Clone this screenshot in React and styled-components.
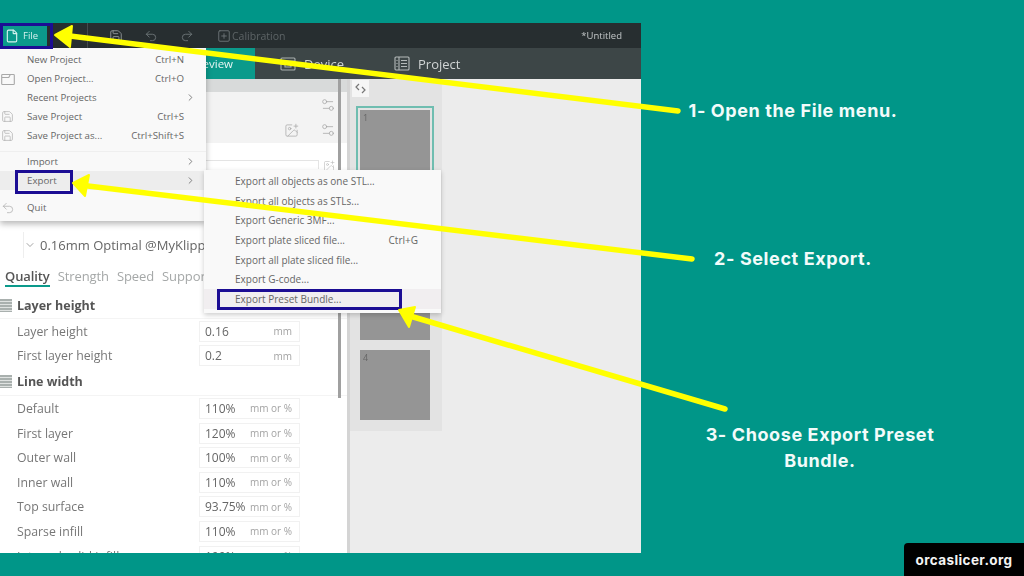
import React from "react";
import styled, { createGlobalStyle } from "styled-components";
import { ChevronRight, ChevronDown, Settings2, Save, Undo2, Redo2, SquarePlus, File as FileIcon, ImagePlus } from "lucide-react";

const Global = createGlobalStyle`
  html, body { margin: 0; padding: 0; background: #009688; }
  #root { width: 1024px; height: 576px; overflow: hidden; }
  * { box-sizing: border-box; }
`;
const Stage = styled.div`
  position: relative; width: 1024px; height: 576px; background: #009688;
  display: flex; overflow: hidden; font-family: "Open Sans", "Liberation Sans", sans-serif;
`;
const Shot = styled.div`
  position: relative; width: 641px; height: 530px; margin-top: 23px; flex: none;
`;
const Window = styled.div`
  width: 100%; height: 100%; background: #ececec; display: flex; flex-direction: column; overflow: hidden; filter: blur(0.45px);
`;
const TitleBar = styled.div`
  height: 25px; flex: none; background: #272e30; display: flex; align-items: center; color: #8b9294; padding-left: 3px;
`;
const FileButton = styled.div`
  width: 44px; height: 20px; background: #0b9a8b; color: #d5f1ee; display: flex; align-items: center; gap: 4px; padding-left: 2px; font-size: 9.5px;
`;
const TitleDivider = styled.div`
  width: 1px; height: 25px; background: #444b4d; margin: 0 21px 0 40px;
`;
const TitleIcon = styled.span`
  display: flex; width: 14px; margin-right: ${p => p.$gap}px; color: ${p => p.$color || "#969c9e"};
`;
const Dim = styled.span`
  font-size: 10.5px; color: #5d6466; margin-left: -14px;
`;
const Untitled = styled.span`
  margin-left: auto; margin-right: 19px; font-size: 9.5px; color: #c3c7c8;
`;
const TabBar = styled.div`
  height: 31px; flex: none; background: #3d4647; display: flex; align-items: stretch; color: #d0d4d4; font-size: 13px;
`;
const ActiveTab = styled.div`
  width: 255px; background: #0b9a8b; color: #e8f6f4; display: flex; align-items: center; justify-content: flex-end; padding-right: 22px; font-size: 11.5px;
`;
const Tab = styled.div`
  display: flex; align-items: center; gap: 8px; margin-left: ${p => p.$left}px;
`;
const Body = styled.div`
  flex: 1; min-height: 0; display: flex;
`;
const Sidebar = styled.div`
  position: relative; width: 347px; flex: none; background: #fff; overflow: hidden;
`;
const GreyStrip = styled.div`
  height: 13px; background: #d8dada;
`;
const ToolPanel = styled.div`
  height: 51px; background: #f3f3f3; display: flex; flex-direction: column; align-items: flex-end; justify-content: center; gap: 9px; padding-right: 11px; color: #a8a8a8;
`;
const ToolRow = styled.div`
  display: flex; align-items: center; gap: 21px;
`;
const FilamentRow = styled.div`
  height: 89px; display: flex; justify-content: flex-end; padding: 17px 12px 0 0; gap: 4px; color: #bbb;
`;
const FilamentInput = styled.div`
  width: 120px; height: 9px; border: 1px solid #e4e4e4; border-bottom: 0;
`;
const PresetBox = styled.div`
  margin-left: 23px; height: 26px; display: flex; align-items: center; gap: 4px; color: #666; font-size: 13px; border-left: 1px solid #eee; white-space: nowrap;
`;
const Tabs = styled.div`
  display: flex; gap: 8px; padding: 10px 0 0 5px; height: 34px; font-size: 13px; color: #a5a8a8; white-space: nowrap; letter-spacing: -0.1px;
`;
const SubTab = styled.span`
  height: 19px; font-weight: ${p => (p.$active ? 600 : 500)}; color: ${p => (p.$active ? "#555" : "#a5a8a8")};
  border-bottom: ${p => (p.$active ? "2px solid #0b9a8b" : "0")}; line-height: 16px;
`;
const Section = styled.div`
  height: ${p => p.$h || 27}px; display: flex; align-items: center; gap: 5px; font-size: 12.5px; font-weight: 700; color: #555;
  border-bottom: 1px solid #f4f4f4;
`;
const Stripes = styled.span`
  width: 12px; height: 13px; background: repeating-linear-gradient(180deg, #a9b0ae 0 2px, #dfe2e1 2px 3px);
`;
const Row = styled.div`
  height: 24.6px; display: flex; align-items: center; padding-left: 17px; font-size: 12.3px; color: #777;
`;
const Label = styled.span`
  width: 182px;
`;
const Field = styled.div`
  width: 101px; height: 21px; border: 1px solid #f1f1f1; display: flex; align-items: center; justify-content: space-between; padding: 0 7px 0 5px; color: #666; font-size: 12px;
`;
const Unit = styled.span`
  font-size: 10px; color: #a3a3a3;
`;
const Scroll = styled.div`
  position: absolute; right: 6px; top: 0; bottom: 155px; width: 3px; background: #a0a0a0;
`;
const Splitter = styled.div`
  width: 3px; flex: none; background: #d4d4d4;
`;
const Plates = styled.div`
  position: relative; width: 92px; height: 352px; flex: none; background: #e3e3e3; display: flex; flex-direction: column; align-items: center; padding: 31px 2px 0 0;
`;
const Toggle = styled.div`
  position: absolute; top: 1px; left: 2px; width: 17px; height: 17px; background: #f6f6f6; display: flex; align-items: center; justify-content: center;
`;
const Plate = styled.div`
  width: 70px; height: 70px; flex: none; margin-bottom: 10px; background: #959595; color: #666; font-size: 9px; padding: 1px 3px;
  outline: ${p => (p.$active ? "2px solid #6fbdb0" : "none")}; outline-offset: 2px;
`;
const Menu = styled.div`
  position: absolute; top: 25px; left: 0; width: 206px; background: #f9f9f9; padding: 1.5px 0 4px; box-shadow: 0 3px 6px rgba(0,0,0,.28); color: #666; font-size: 9.7px;
`;
const Item = styled.div`
  position: relative; height: 19px; display: flex; align-items: center; padding: 0 16px 0 27px; white-space: nowrap;
  background: ${p => (p.$hover ? "#ededed" : "transparent")};
`;
const ItemIcon = styled.span`
  position: absolute; left: 1px; top: 3px; display: flex; color: #a9a9a9;
`;
const Shortcut = styled.span`
  margin-left: auto; margin-right: 6px;
`;
const SubShortcut = styled.span`
  margin-left: auto;
`;
const Chevron = styled.span`
  margin-left: auto; margin-right: -6px; display: flex; color: #777;
`;
const Gap = styled.div`
  height: 7.5px; border-bottom: ${p => (p.$line ? "1px solid #efefef" : "0")};
`;
const SubMenu = styled.div`
  position: absolute; top: 147px; left: 204px; width: 237px; background: #f9f9f9; padding: 1.5px 0 4px; box-shadow: 0 2px 5px rgba(0,0,0,.2); color: #666; font-size: 10px;
`;
const SubItem = styled.div`
  height: 19.6px; display: flex; align-items: center; padding: 0 23px 0 31px; white-space: nowrap;
  background: ${p => (p.$hover ? "#f1eef0" : "transparent")};
`;
const Mark = styled.div`
  position: absolute; left: ${p => p.$x}px; top: ${p => p.$y}px; width: ${p => p.$w}px; height: ${p => p.$h}px; border: 3px solid #1c0d94;
`;
const Arrows = styled.svg`
  position: absolute; inset: 0; width: 1024px; height: 576px; pointer-events: none;
`;
const Captions = styled.div`
  flex: 1; display: flex; flex-direction: column; color: #f2fbfa; font-family: Inter, "Open Sans", sans-serif; font-weight: 700; font-size: 18px; line-height: 26px; text-align: center;
`;
const Caption = styled.div`
  width: ${p => p.$w}px; margin-top: ${p => p.$top}px; margin-left: ${p => p.$left}px; letter-spacing: 0.6px;
`;
const Brand = styled.div`
  position: absolute; right: 0; bottom: 0; width: 120px; height: 33px; border-radius: 4px 0 0 0; background: #000; color: #f4f4f4;
  display: flex; align-items: center; justify-content: center; font-family: Inter, sans-serif; font-weight: 700; font-size: 13.5px; letter-spacing: .4px;
`;

const DeviceGlyph = () => (
  <svg width="16" height="14" viewBox="0 0 16 14" fill="none" stroke="#aab0b0" strokeWidth="1.1">
    <rect x="1" y="1" width="14" height="12" rx="1" /><path d="M1 4h14M5 7h6v3H5z" />
  </svg>
);
const ProjectGlyph = () => (
  <svg width="16" height="15" viewBox="0 0 16 15" fill="none" stroke="#b5baba" strokeWidth="1.1">
    <rect x="1" y="1" width="14" height="13" rx="1" /><path d="M5 1v13M7 4.500h6M7 7.500h6M7 10.500h6M2.500 7.500h1M2.500 10.500h1M2.500 4.500h1" />
  </svg>
);
const OpenGlyph = () => (
  <svg width="14" height="14" viewBox="0 0 14 14" fill="none" stroke="#a9a9a9" strokeWidth="1.1">
    <path d="M1.500 2.500h11a.8.8 0 0 1 .8.8v8.400a.8.8 0 0 1-.8.8h-11a.8.8 0 0 1-.8-.8V3.300a.8.8 0 0 1 .8-.8zM.8 5.500h7l1.500-3" />
  </svg>
);
const CollapseGlyph = () => (
  <svg width="13" height="13" viewBox="0 0 13 13" fill="none" stroke="#777" strokeWidth="1.2">
    <path d="M5 2L2 5l3 3M8 5l3 3-3 3" />
  </svg>
);

const lines = [
  { n: "Default", v: "110%" }, { n: "First layer", v: "120%" }, { n: "Outer wall", v: "100%" },
  { n: "Inner wall", v: "110%" }, { n: "Top surface", v: "93.75%" }, { n: "Sparse infill", v: "110%" },
  { n: "Internal solid infill", v: "100%" },
];

export default function App() {
  return (
    <Stage>
      <Global />
      <Shot>
        <Window>
          <TitleBar>
            <FileButton><FileIcon size={14} strokeWidth={2} />File</FileButton>
            <TitleDivider />
            <TitleIcon $gap={21}><Save size={14} strokeWidth={1.5} /></TitleIcon>
            <TitleIcon $gap={22} $color="#70787a"><Undo2 size={14} strokeWidth={1.5} /></TitleIcon>
            <TitleIcon $gap={23} $color="#70787a"><Redo2 size={14} strokeWidth={1.5} /></TitleIcon>
            <TitleIcon $gap={15} $color="#70787a"><SquarePlus size={14} strokeWidth={1.5} /></TitleIcon>
            <Dim>Calibration</Dim>
            <Untitled>*Untitled</Untitled>
          </TitleBar>
          <TabBar>
            <ActiveTab>Preview</ActiveTab>
            <Tab $left={25}><DeviceGlyph />Device</Tab>
            <Tab $left={50}><ProjectGlyph />Project</Tab>
          </TabBar>
          <Body>
            <Sidebar>
              <GreyStrip />
              <ToolPanel>
                <Settings2 size={16} strokeWidth={1.2} />
                <ToolRow><ImagePlus size={15} strokeWidth={1.2} /><Settings2 size={16} strokeWidth={1.2} /></ToolRow>
              </ToolPanel>
              <FilamentRow><FilamentInput /><ImagePlus size={12} strokeWidth={1.2} /></FilamentRow>
              <PresetBox><ChevronDown size={12} strokeWidth={1.2} />0.16mm Optimal @MyKlipper</PresetBox>
              <Tabs>
                <SubTab $active>Quality</SubTab><SubTab>Strength</SubTab><SubTab>Speed</SubTab><SubTab>Support</SubTab>
              </Tabs>
              <Section><Stripes />Layer height</Section>
              <Row><Label>Layer height</Label><Field>0.16<Unit>mm</Unit></Field></Row>
              <Row><Label>First layer height</Label><Field>0.2<Unit>mm</Unit></Field></Row>
              <Section $h={28}><Stripes />Line width</Section>
              {lines.map(l => (
                <Row key={l.n}><Label>{l.n}</Label><Field>{l.v}<Unit>mm or %</Unit></Field></Row>
              ))}
              <Scroll />
            </Sidebar>
            <Splitter />
            <Plates>
              <Toggle><CollapseGlyph /></Toggle>
              <Plate $active>1</Plate><Plate>2</Plate><Plate>3</Plate><Plate>4</Plate>
            </Plates>
          </Body>
        </Window>
        <Menu>
          <Item>New Project<Shortcut>Ctrl+N</Shortcut></Item>
          <Item><ItemIcon><OpenGlyph /></ItemIcon>Open Project...<Shortcut>Ctrl+O</Shortcut></Item>
          <Item>Recent Projects<Chevron><ChevronRight size={11} /></Chevron></Item>
          <Item><ItemIcon><Save size={13} strokeWidth={1.2} /></ItemIcon>Save Project<Shortcut>Ctrl+S</Shortcut></Item>
          <Item><ItemIcon><Save size={13} strokeWidth={1.2} /></ItemIcon>Save Project as...<Shortcut>Ctrl+Shift+S</Shortcut></Item>
          <Gap $line />
          <Item>Import<Chevron><ChevronRight size={11} /></Chevron></Item>
          <Item $hover>Export<Chevron><ChevronRight size={11} /></Chevron></Item>
          <Gap />
          <Item><ItemIcon><Undo2 size={14} strokeWidth={1.2} /></ItemIcon>Quit</Item>
        </Menu>
        <SubMenu>
          <SubItem>Export all objects as one STL...</SubItem>
          <SubItem>Export all objects as STLs...</SubItem>
          <SubItem>Export Generic 3MF...</SubItem>
          <SubItem>Export plate sliced file...<SubShortcut>Ctrl+G</SubShortcut></SubItem>
          <SubItem>Export all plate sliced file...</SubItem>
          <SubItem>Export G-code...</SubItem>
          <SubItem $hover>Export Preset Bundle...</SubItem>
        </SubMenu>
        <Mark $x={0} $y={0} $w={53} $h={26} />
        <Mark $x={15} $y={147} $w={58} $h={24} />
        <Mark $x={217} $y={266} $w={185} $h={21} />
      </Shot>
      <Captions>
        <Caption $w={300} $top={98} $left={2}>1- Open the File menu.</Caption>
        <Caption $w={300} $top={122} $left={2}>2- Select Export.</Caption>
        <Caption $w={260} $top={150} $left={49}>3- Choose Export Preset Bundle.</Caption>
      </Captions>
      <Arrows viewBox="0 0 1024 576">
        <g fill="#ffff00" stroke="#ffff00" strokeLinejoin="round" strokeLinecap="round">
          <path d="M678 111L70 36" strokeWidth="5.500" />
          <path d="M55 35L72 26L70 47Z" strokeWidth="2" />
          <path d="M692 259L88 186" strokeWidth="5.500" />
          <path d="M73 183L89 175L85 196Z" strokeWidth="2" />
          <path d="M725 409L410 316" strokeWidth="5.500" />
          <path d="M399 310L415 307L409 327Z" strokeWidth="2" />
        </g>
      </Arrows>
      <Brand>orcaslicer.org</Brand>
    </Stage>
  );
}
